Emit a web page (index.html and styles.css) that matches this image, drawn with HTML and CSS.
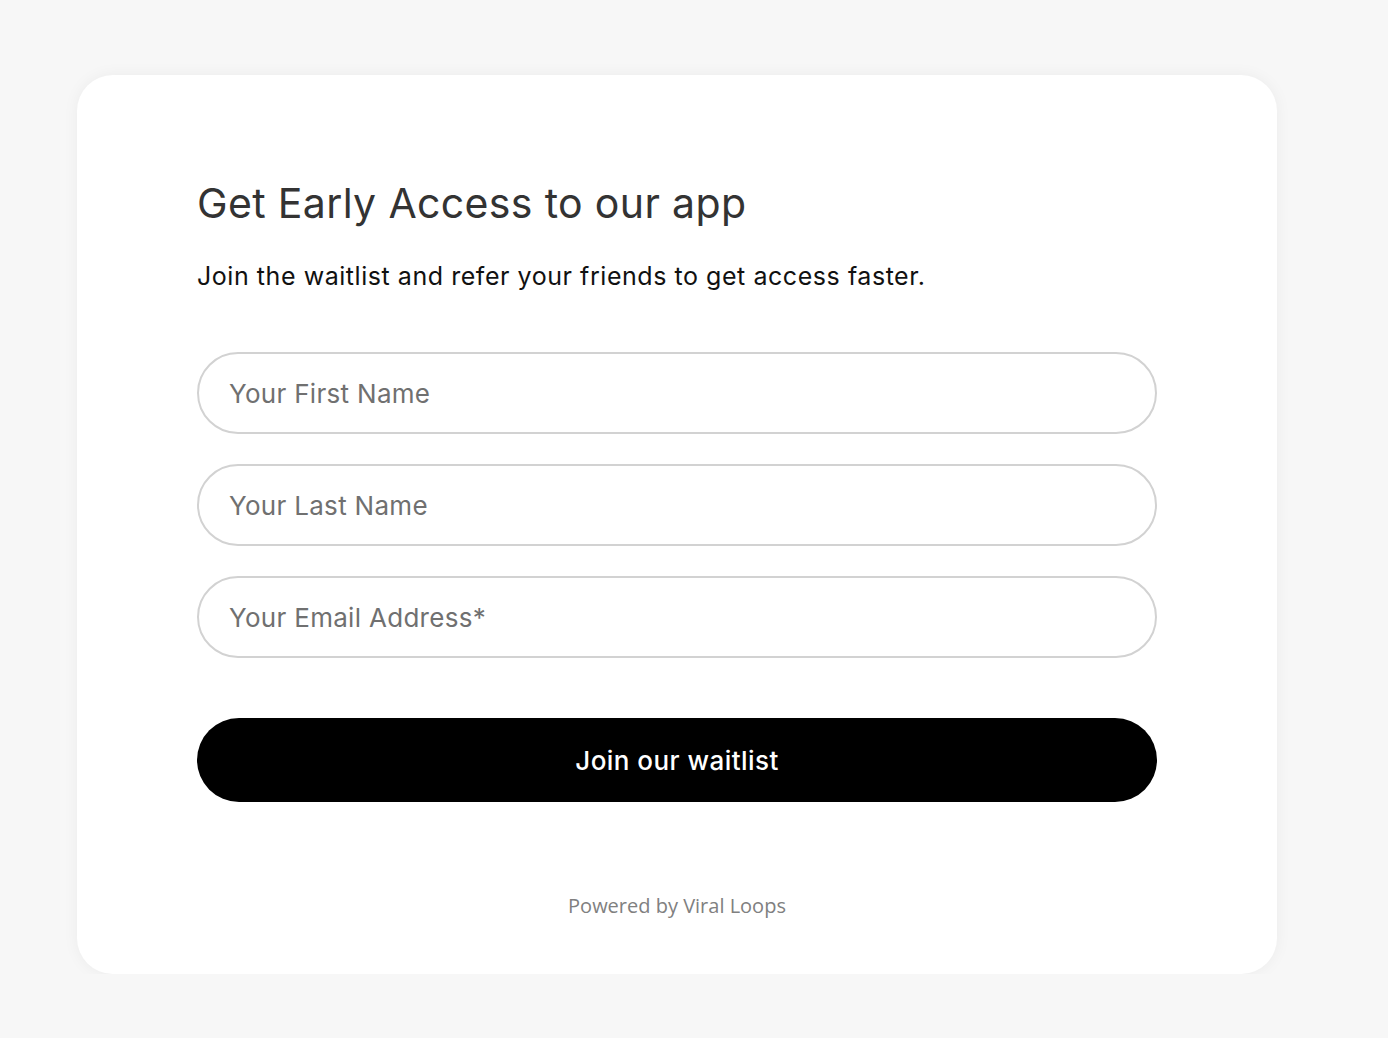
FILE: index.html
```html
<!DOCTYPE html>
<html lang="en">
<head>
<meta charset="utf-8">
<title>Get Early Access</title>
<link rel="stylesheet" href="styles.css">
</head>
<body>
<main class="page">
  <section class="card">
    <h1 class="title">Get Early Access to our app</h1>
    <p class="subtitle">Join the waitlist and refer your friends to get access faster.</p>
    <form class="form">
      <input class="field" type="text" placeholder="Your First Name">
      <input class="field" type="text" placeholder="Your Last Name">
      <input class="field" type="email" placeholder="Your Email Address*">
      <button class="submit" type="button">Join our waitlist</button>
    </form>
    <p class="powered">Powered by Viral Loops</p>
  </section>
</main>
</body>
</html>
```
FILE: styles.css
```css
html, body {
  margin: 0;
  padding: 0;
  background: #f7f7f7;
}
.page {
  padding: 75px 0 0 77px;
}
.card {
  box-sizing: border-box;
  width: 1200px;
  height: 899px;
  background: #fff;
  border-radius: 36px;
  box-shadow: 0 0 16px rgba(0, 0, 0, 0.05);
  padding: 100px 120px 0;
  font-family: Inter, Roboto, "Liberation Sans", sans-serif;
}
.title {
  margin: 0;
  font-size: 41px;
  line-height: 56px;
  font-weight: 400;
  color: #333;
  letter-spacing: 0.35px;
}
.subtitle {
  margin: 29px 0 0;
  font-size: 25px;
  line-height: 32px;
  color: #111;
  letter-spacing: 0.55px;
}
.form {
  display: flex;
  flex-direction: column;
  gap: 30px;
  margin-top: 60px;
}
.field {
  box-sizing: border-box;
  height: 82px;
  border: 2px solid #d2d2d2;
  border-radius: 41px;
  padding: 0 30px;
  font-family: inherit;
  font-size: 26px;
  letter-spacing: 0.3px;
  color: #333;
  outline: none;
}
.field::placeholder {
  color: #707070;
}
.submit {
  margin-top: 30px;
  height: 84px;
  border: none;
  border-radius: 42px;
  background: #000;
  color: #fff;
  font-family: inherit;
  font-size: 26px;
  font-weight: 500;
  letter-spacing: 0.45px;
}
.powered {
  margin: 90px 0 0;
  text-align: center;
  font-family: "Open Sans", sans-serif;
  font-size: 20px;
  color: #808080;
}
```
